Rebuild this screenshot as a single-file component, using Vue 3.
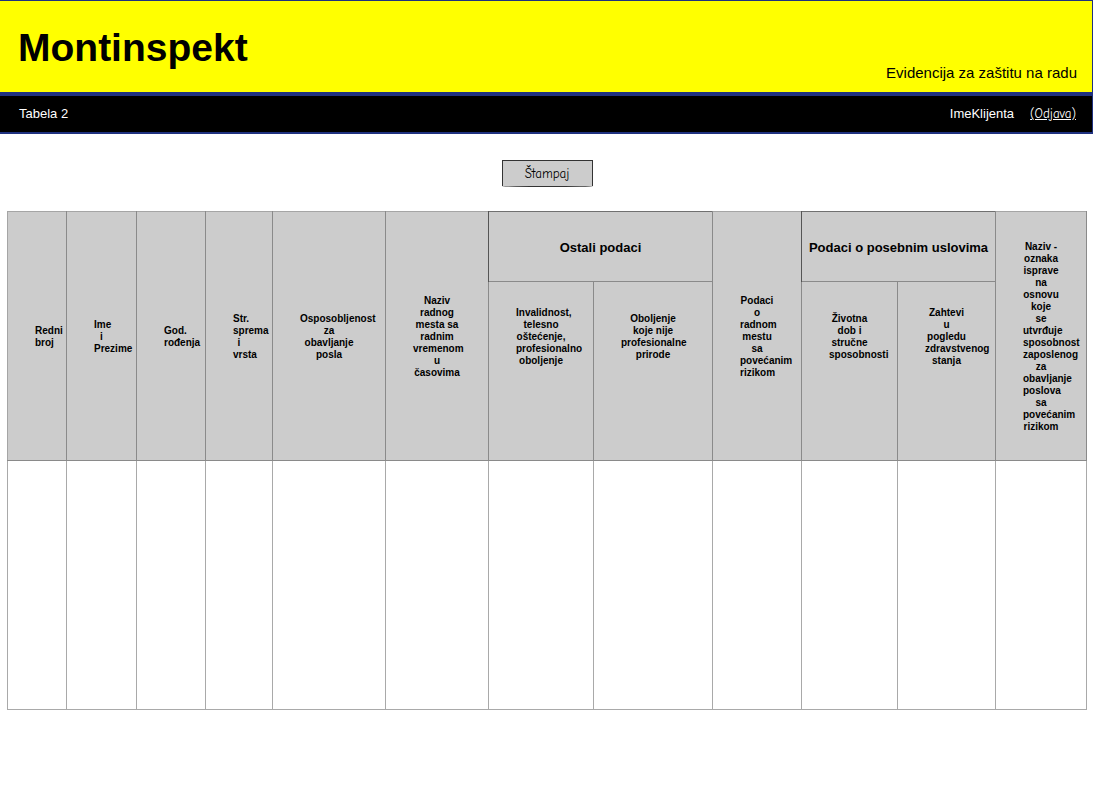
<script setup>
const columns = [59, 70, 69, 67, 113, 103, 105, 119, 89, 96, 98, 91]

const topCells = [
  { lines: ['Redni', 'broj'] },
  { lines: ['Ime', 'i', 'Prezime'] },
  { lines: ['God.', 'rođenja'] },
  { lines: ['Str.', 'sprema', 'i', 'vrsta'] },
  { lines: ['Osposobljenost', 'za', 'obavljanje', 'posla'] },
  { lines: ['Naziv', 'radnog', 'mesta sa', 'radnim', 'vremenom', 'u', 'časovima'] },
  { group: 'Ostali podaci' },
  { lines: ['Podaci', 'o', 'radnom', 'mestu', 'sa', 'povećanim', 'rizikom'] },
  { group: 'Podaci o posebnim uslovima' },
  {
    lines: [
      'Naziv -', 'oznaka', 'isprave', 'na', 'osnovu', 'koje', 'se', 'utvrđuje',
      'sposobnost', 'zaposlenog', 'za', 'obavljanje', 'poslova', 'sa', 'povećanim', 'rizikom',
    ],
  },
]

const subCells = [
  ['Invalidnost,', 'telesno', 'oštećenje,', 'profesionalno', 'oboljenje'],
  ['Oboljenje', 'koje nije', 'profesionalne', 'prirode'],
  ['Životna', 'dob i', 'stručne', 'sposobnosti'],
  ['Zahtevi', 'u', 'pogledu', 'zdravstvenog', 'stanja'],
]
</script>

<template>
  <div class="page">
    <header class="masthead">
      <div class="brand">
        <h1>Montinspekt</h1>
        <p>Evidencija za zaštitu na radu</p>
      </div>
      <nav class="bar">
        <span>Tabela 2</span>
        <div class="user">
          <span>ImeKlijenta</span>
          <a href="#" class="hand">(Odjava)</a>
        </div>
      </nav>
    </header>
    <main>
      <button type="button" class="print hand">Štampaj</button>
      <table>
        <colgroup>
          <col v-for="(w, i) in columns" :key="i" :style="{ width: w + 'px' }" />
        </colgroup>
        <thead>
          <tr class="groups">
            <template v-for="(cell, i) in topCells" :key="i">
              <th v-if="cell.group" class="group" scope="colgroup" colspan="2">{{ cell.group }}</th>
              <th v-else scope="col" rowspan="2">
                <span v-for="(line, j) in cell.lines" :key="j">{{ line }}&#32;</span>
              </th>
            </template>
          </tr>
          <tr class="subs">
            <th v-for="(lines, i) in subCells" :key="i" scope="col">
              <span v-for="(line, j) in lines" :key="j">{{ line }}&#32;</span>
            </th>
          </tr>
        </thead>
        <tbody>
          <tr>
            <td v-for="(w, i) in columns" :key="i"></td>
          </tr>
        </tbody>
      </table>
    </main>
  </div>
</template>

<style>
body {
  margin: 0;
  background: #fff;
}
</style>

<style scoped>
.page {
  font-family: Arial, "Liberation Sans", sans-serif;
  font-size: 13px;
  color: #000;
}
.masthead {
  border: solid #1f3180;
  border-width: 1px 1px 2px 0;
}
.brand {
  display: flex;
  justify-content: space-between;
  align-items: flex-end;
  background: #ff0;
  border-bottom: 4px solid #1f3180;
  padding: 23px 15px 10px 18px;
}
h1 {
  margin: 0 0 10px;
  font-size: 39px;
  line-height: 48px;
}
.brand p {
  margin: 0;
  font-size: 15px;
  line-height: 18px;
}
.bar {
  display: flex;
  justify-content: space-between;
  align-items: center;
  height: 34px;
  padding: 0 16px 2px 19px;
  background: #000;
  color: #fff;
}
.user {
  display: flex;
  align-items: center;
  gap: 16px;
}
.hand {
  font-family: "Comic Sans MS", "Comic Neue", cursive, sans-serif;
  font-size: 13px;
}
.user a {
  color: #fff;
}
main {
  display: flex;
  flex-direction: column;
  align-items: center;
  padding: 26px 6px 0 7px;
}
.print {
  width: 91px;
  height: 27px;
  margin-bottom: 24px;
  padding: 0;
  border: 1px solid #333;
  border-radius: 0 0 50% 50% / 0 0 1px 1px;
  background: #ccc;
  color: #000;
}
table {
  width: 100%;
  table-layout: fixed;
  border-collapse: collapse;
}
th {
  box-sizing: border-box;
  padding: 2px 27px 0;
  border: 1px solid #8a8a8a;
  border-top-color: #a5a5a5;
  background: #ccc;
  font-size: 10px;
  line-height: 12px;
  text-align: center;
  vertical-align: middle;
}
th:first-child {
  border-left-color: #a5a5a5;
}
.subs th:first-child {
  border-left-color: #8a8a8a;
}
th span {
  display: block;
  white-space: nowrap;
}
.groups {
  height: 70px;
}
.subs {
  height: 179px;
}
.subs th {
  padding-bottom: 70px;
}
th.group {
  padding: 2px 0 0;
  border-top-color: #707070;
  border-left: 1px double #555;
  font-size: 13px;
  line-height: 16px;
  white-space: nowrap;
}
td {
  height: 249px;
  box-sizing: border-box;
  padding: 0;
  border: 1px solid #a9a9a9;
}
</style>
